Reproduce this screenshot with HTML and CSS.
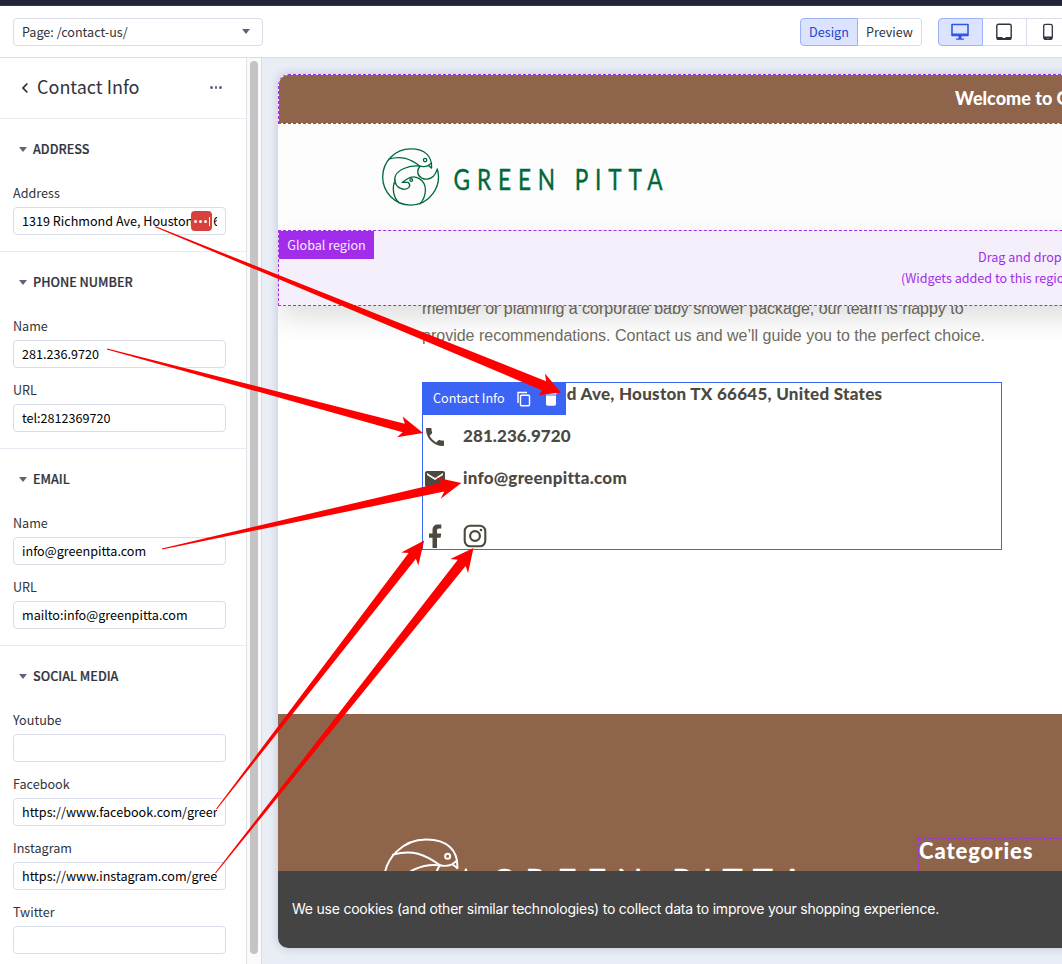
FILE: index.html
```
<!DOCTYPE html>
<html lang="en">
<head>
<meta charset="utf-8">
<title>Page Builder - Contact Info</title>
<link rel="stylesheet" href="styles.css">
</head>
<body>
<svg class="defs" width="0" height="0" aria-hidden="true">
  <symbol id="logo" viewBox="0 0 282 58">
    <g transform="translate(-7.600 -8.500) scale(.338)" fill="none" stroke="currentColor" stroke-width="3.900" stroke-linecap="round" stroke-linejoin="round">
      <path d="M169 84C171 50 150 28 108 28A83 83 0 0 0 107 194C164 194 201 138 186 87C180 110 162 124 140 114C126 107 125 90 135 79C105 57 80 47 42 58"/>
      <path d="M169 84L159 77L168 70M159 77Q148 82 135 79C103 75 60 90 60 118C62 146 91 154 103 141Q107 133 100 127L82 127L98 116C120 102 151 118 151 150Q150 174 135 190M62 120C50 144 57 173 73 187"/>
      <circle cx="150" cy="61" r="5"/><circle cx="109" cy="120" r="4"/>
    </g>
    <text class="logo-text" transform="translate(71.500 41.700) scale(.78 1)" textLength="268" lengthAdjust="spacing">GREEN PITTA</text>
  </symbol>
</svg>

<div class="app-strip"></div>
<header class="topbar">
  <div class="page-select"><span>Page: /contact-us/</span><i class="caret"></i></div>
  <div class="group mode">
    <span class="btn active">Design</span><span class="btn">Preview</span>
  </div>
  <div class="group devices">
    <span class="btn active"><svg width="20" height="18" viewBox="0 0 20 18"><path d="M2 1.5h16v11H2z" fill="none" stroke="currentColor" stroke-width="1.6" stroke-linejoin="round"/><path d="M2 10.5h16v2H2zM8.5 13h3v2.5H14v1.3H6v-1.3h2.5z" fill="currentColor"/></svg></span>
    <span class="btn"><svg width="18" height="18" viewBox="0 0 18 18"><rect x="1.8" y="1.3" width="14.4" height="15" rx="1.6" fill="none" stroke="currentColor" stroke-width="1.4"/><path d="M2 14h5.500v1h3v-1H16v3H2z" fill="currentColor"/></svg></span>
    <span class="btn"><svg width="12" height="18" viewBox="0 0 12 18"><rect x="1.700" y="1.300" width="8.600" height="15" rx="1.800" fill="none" stroke="currentColor" stroke-width="1.300"/><path d="M2 13.500h8v3H7v-1H5v1H2z" fill="currentColor"/></svg></span>
  </div>
</header>

<div class="workspace">
  <aside class="sidebar">
    <div class="panel-head">
      <svg width="8" height="12" viewBox="0 0 8 12"><path d="M6.300 1.500L2 6l4.300 4.500" fill="none" stroke="currentColor" stroke-width="1.800"/></svg>
      <h1>Contact Info</h1>
      <span class="more"><i></i><i></i><i></i></span>
    </div>
    <section>
      <h2><i class="caret"></i><span>ADDRESS</span></h2>
      <label>Address</label>
      <div class="input"><span>1319 Richmond Ave, Houston TX 66645</span><b class="ext"><i></i><i></i><i></i><em></em></b></div>
    </section>
    <section>
      <h2><i class="caret"></i><span>PHONE NUMBER</span></h2>
      <label>Name</label>
      <div class="input"><span>281.236.9720</span></div>
      <label>URL</label>
      <div class="input"><span>tel:2812369720</span></div>
    </section>
    <section>
      <h2><i class="caret"></i><span>EMAIL</span></h2>
      <label>Name</label>
      <div class="input"><span>info@greenpitta.com</span></div>
      <label>URL</label>
      <div class="input"><span>mailto:info@greenpitta.com</span></div>
    </section>
    <section>
      <h2><i class="caret"></i><span>SOCIAL MEDIA</span></h2>
      <label>Youtube</label>
      <div class="input"><span></span></div>
      <label>Facebook</label>
      <div class="input"><span>https://www.facebook.com/greenpitta</span></div>
      <label>Instagram</label>
      <div class="input"><span>https://www.instagram.com/greenpitta</span></div>
      <label>Twitter</label>
      <div class="input"><span></span></div>
    </section>
  </aside>
  <div class="scrollbar"><div class="thumb"></div></div>

  <main class="canvas">
    <div class="page">
      <div class="banner"><span>Welcome to Green Pitta</span></div>
      <div class="store-head"><svg class="logo" width="282" height="58"><use href="#logo"/></svg></div>
      <div class="region">
        <span class="region-tag">Global region</span>
        <p class="drag-a">Drag and drop widgets here</p>
        <p class="drag-b">(Widgets added to this region will show globally)</p>
      </div>
      <div class="content">
        <p class="copy">member or planning a corporate baby shower package, our team is happy to<br><span>provide recommendations. Contact us and we’ll guide you to the perfect choice.</span></p>
        <div class="widget">
          <div class="row address"><span class="ico"></span><span class="w-address">1319 Richmond Ave, Houston TX 66645, United States</span></div>
          <div class="row"><span class="ico"><svg width="24" height="24" viewBox="0 0 24 24"><path fill="currentColor" d="M6.620 10.790c1.440 2.830 3.760 5.140 6.590 6.590l2.200-2.200c.27-.27.67-.36 1.020-.24 1.120.37 2.330.57 3.570.57.55 0 1 .45 1 1V20c0 .55-.45 1-1 1-9.390 0-17-7.610-17-17 0-.55.45-1 1-1h3.500c.55 0 1 .45 1 1 0 1.250.2 2.450.57 3.570.11.35.03.74-.25 1.020l-2.200 2.200z"/></svg></span><span class="w-phone">281.236.9720</span></div>
          <div class="row"><span class="ico"><svg width="24" height="24" viewBox="0 0 24 24"><path fill="currentColor" d="M20 4H4c-1.100 0-2 .9-2 2v12c0 1.100.9 2 2 2h16c1.100 0 2-.9 2-2V6c0-1.100-.9-2-2-2zm0 4l-8 5-8-5V6l8 5 8-5v2z"/></svg></span><span class="w-mail">info@greenpitta.com</span></div>
          <div class="social">
            <svg width="24" height="24" viewBox="0 0 24 24"><path fill="currentColor" d="M9.500 24V13.700H6V9.600h3.500V6.200C9.500 2.500 11.500.5 15 .5h3.300v4h-2.300c-1.500 0-2 .7-2 2v3.100h4.200l-.6 4.100H14V24z"/></svg>
            <svg width="24" height="24" viewBox="0 0 24 24" fill="none" stroke="currentColor"><rect x="1.700" y="1.700" width="20.600" height="20.600" rx="5.500" stroke-width="2.100"/><circle cx="12" cy="12" r="4.900" stroke-width="2.200"/><circle cx="18" cy="6" r="1.300" fill="currentColor" stroke="none"/></svg>
          </div>
          <div class="widget-bar">
            <span>Contact Info</span>
            <svg width="16" height="16" viewBox="0 0 16 16" fill="none" stroke="currentColor" stroke-width="1.400"><path d="M2 12V1.500h9"/><rect x="4.500" y="4.200" width="9" height="10.600" rx="1"/></svg>
            <svg width="14" height="16" viewBox="0 0 14 16"><path fill="currentColor" d="M2 4.500h10V13q0 1.800-1.800 1.800H3.800Q2 14.800 2 13zM1.500 2h3.300l.8-1h2.800l.8 1h3.300v1.400h-11z"/></svg>
          </div>
        </div>
      </div>
      <div class="footer">
        <svg class="logo" width="423" height="87"><use href="#logo"/></svg>
        <div class="categories"><span>Categories</span></div>
      </div>
      <div class="cookies"><span>We use cookies (and other similar technologies) to collect data to improve your shopping experience.</span></div>
    </div>
  </main>
</div>

<svg class="arrows" width="1062" height="964" viewBox="0 0 1062 964" fill="#f00">
  <path transform="translate(155.500 226.800) rotate(22.240)" d="M0-.5L420-5L416-11.500L438 0L418 11L420 5L0 .5z"/>
  <path transform="translate(107 349) rotate(14.890)" d="M0-.5L307-4.400L303-10.800L327 0L303 10.800L307 4.400L0 .5z"/>
  <path transform="translate(162 549) rotate(-12.430)" d="M0-.5L288-4.700L283-10.800L306.500 0L283 10.800L288 4.700L0 .5z"/>
  <path transform="translate(216.500 809) rotate(-52.290)" d="M0-.5L320-4.600L316-10.800L339.500 0L316 10.800L320 4.600L0 .5z"/>
  <path transform="translate(215.500 873) rotate(-51.560)" d="M0-.5L396-5L392-11.300L415 0L392 11.300L396 5L0 .5z"/>
</svg>
</body>
</html>
```
FILE: styles.css
```
* { box-sizing: border-box; }
body {
  margin: 0; width: 1062px; height: 964px; overflow: hidden; position: relative;
  display: flex; flex-direction: column; background: #fff; color: #313440;
  font: 12.6px/20px "Noto Sans CJK SC", "Noto Sans", sans-serif;
}
h1, h2, p { margin: 0; }
i, em, b { font-style: normal; }
.defs { position: absolute; }
.app-strip { height: 6px; flex: none; background: #22253a; border-bottom: 1px solid #3a3848; }

.topbar { height: 52px; flex: none; display: flex; align-items: center; padding-left: 13px; border-bottom: 1px solid #d9dce9; overflow: hidden; }
.caret { display: block; width: 0; border: 4px solid transparent; border-top: 5px solid #5e637a; border-bottom: 0; }
.page-select { width: 250px; flex: none; height: 28px; display: flex; align-items: center; justify-content: space-between; padding: 0 12px 0 8px; border: 1px solid #d9dce9; border-radius: 4px; }
.group { display: flex; height: 28px; flex: none; }
.mode { margin-left: 537px; }
.devices { margin-left: 16px; }
.btn { display: flex; align-items: center; justify-content: center; height: 28px; border: 1px solid #d9dce9; border-left: 0; }
.btn.active { border: 1px solid #9db1f7; background: #dbe3fe; color: #2244d0; border-radius: 4px 0 0 4px; }
.mode .btn { width: 64px; }
.mode .btn.active { width: 58px; }
.mode .btn:last-child { border-radius: 0 4px 4px 0; }
.devices .btn { width: 44px; padding-right: 2px; }
.devices .btn.active { width: 45px; color: #2f55ee; }

.workspace { flex: 1; min-height: 0; display: flex; }
.sidebar { width: 247px; flex: none; border-right: 1px solid #e2e3ea; overflow: hidden; }
.panel-head { height: 61px; display: flex; align-items: center; padding: 0 24px 1px 21px; border-bottom: 1px solid #e8e9f2; }
h1 { font-size: 18px; line-height: 28px; font-weight: 400; margin: 0 0 3px 8px; }
.more { display: flex; gap: 2px; margin-left: auto; }
.more i { width: 2.600px; height: 2.600px; border-radius: 2px; background: #5e637a; }
section { padding: 20px 20px 16px 13px; border-bottom: 1px solid #e8e9f2; display: flex; flex-direction: column; }
h2 { display: flex; align-items: center; gap: 6px; font-size: 12.600px; font-weight: 500; height: 20px; margin-bottom: 24px; padding-left: 6px; -webkit-text-stroke: .2px; }
label { height: 20px; margin-bottom: 4px; }
.input { height: 28px; position: relative; display: flex; align-items: center; padding: 0 8px; border: 1px solid #d9dce9; border-radius: 4px; color: #000; margin-bottom: 12px; }
.input:last-child { margin-bottom: 0; }
.input span { overflow: hidden; white-space: nowrap; }
.ext { position: absolute; left: 177px; top: 3px; width: 21px; height: 20px; border-radius: 4px; background: #d8403c; display: flex; align-items: center; gap: 2px; padding-left: 3px; }
.ext i { width: 3px; height: 3px; border-radius: 2px; background: #fff; }
.ext em { width: 1px; height: 9px; background: #fff; }
.scrollbar { width: 15px; flex: none; padding: 3px 4px 10px 3px; background: #fafafa; border-right: 1px solid #dcdde2; }
.thumb { width: 8px; height: 100%; border-radius: 4px; background: #c4c4c4; }

.canvas { flex: 1; min-width: 0; overflow: hidden; background: #e9edf5; padding: 16px 0 0 16px; }
.page { width: 1120px; height: 874px; border-radius: 10px; overflow: hidden; background: #fff; box-shadow: 0 0 10px rgba(40, 50, 80, .22); white-space: nowrap; }
.banner { height: 50px; display: flex; align-items: center; padding: 0 0 2px 676px; background: #8e654b; background-clip: padding-box; border: 1px dashed #a12dea; border-radius: 10px 0 0; color: #fff; font: 900 18px/24px Lato, sans-serif; }
.store-head { height: 106px; padding: 24px 0 0 104px; background: #fdfdfd; color: #00693a; }
.logo { display: block; }
.logo-text { font: 400 29px Lato, sans-serif; fill: currentColor; stroke: currentColor; stroke-width: .4px; }
.region { height: 76px; position: relative; z-index: 1; padding-top: 15px; background: #f5effc; border: 1px dashed #a12dea; color: #a12dea; line-height: 21px; box-shadow: 0 12px 28px rgba(0, 0, 0, .13); }
.region-tag { position: absolute; left: 0; top: 0; width: 95px; height: 28px; line-height: 28px; text-align: center; background: #a12dea; color: #f8e9ff; }
.drag-a { padding-left: 699px; }
.drag-b { padding-left: 622px; }
.content { display: flow-root; height: 408px; padding-left: 144px; }
.copy { margin-top: -11px; font: 16px/27px "Liberation Sans", Arial, sans-serif; color: #706c61; }
.widget { position: relative; width: 580px; height: 168px; margin-top: 33px; border: 1px solid #3c64f4; color: #4d493f; font: 900 17px/24px Lato, sans-serif; display: flex; flex-direction: column; gap: 18px; }
.row { display: flex; height: 24px; gap: 16px; line-height: 22px; }
.ico { width: 24px; height: 24px; flex: none; }
.w-address { margin-left: -10px; letter-spacing: .27px; }
.w-phone { letter-spacing: .08px; }
.w-mail { letter-spacing: .26px; }
.social { display: flex; gap: 16px; margin-top: 15px; }
.widget-bar { position: absolute; left: 0; top: 0; width: 143px; height: 32px; display: flex; align-items: center; padding: 0 0 1px 10px; gap: 12px; background: #3c64f4; color: #fff; font: 12.600px/20px "Noto Sans CJK SC", sans-serif; }
.widget-bar span { margin: -1px -1px 0 0; }
.footer { height: 157px; display: flex; justify-content: flex-start; overflow: hidden; padding: 124px 0 0 105px; background: #8e654b; color: #fff; }
.footer .logo { flex: none; }
.categories { flex: none; margin-left: 112px; width: 480px; height: 60px; border: 1px dashed #a12dea; font: 900 22px/24px Lato, sans-serif; letter-spacing: .9px; }
.cookies { height: 77px; display: flex; align-items: center; padding: 0 0 2px 14px; background: #444; color: #fff; font: 14px/20px Inter, sans-serif; letter-spacing: -.225px; }
.arrows { position: absolute; left: 0; top: 0; z-index: 5; }
```
